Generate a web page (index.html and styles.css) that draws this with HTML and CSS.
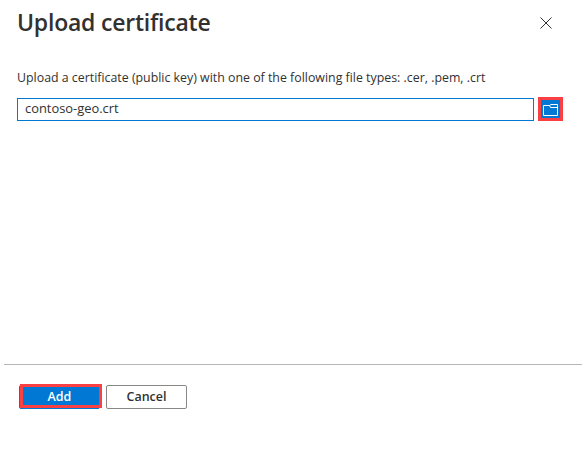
FILE: index.html
```html
<!DOCTYPE html>
<html lang="en">
<head>
<meta charset="utf-8">
<title>Upload certificate</title>
<link rel="stylesheet" href="styles.css">
</head>
<body>
<main class="panel">
  <header class="header">
    <h1 class="title">Upload certificate</h1>
    <button class="close" aria-label="Close"><svg width="12" height="12" viewBox="0 0 12 12"><path d="M.5.5l11 11M11.500.5l-11 11"/></svg></button>
  </header>
  <section class="content">
    <p class="hint">Upload a certificate (public key) with one of the following file types: .cer, .pem, .crt</p>
    <div class="picker">
      <div class="field">contoso-geo.crt</div>
      <button class="browse" aria-label="Browse"><svg width="15" height="12" viewBox="0 0 15 12"><path d="M.5 1.500H6.500L8 .5H14.500V11.500H.5zM6.500 1.500L7.500 3.500H14.500"/></svg></button>
    </div>
  </section>
  <footer class="footer">
    <div class="highlight"><button class="btn primary">Add</button></div>
    <button class="btn">Cancel</button>
  </footer>
</main>
</body>
</html>
```
FILE: styles.css
```css
* { box-sizing: border-box; }
body { margin: 0; background: #fff; color: #323130; font-family: "Open Sans", "Noto Sans", sans-serif; }
button { font: inherit; color: inherit; padding: 0; }
.panel { width: 582px; height: 459px; display: flex; flex-direction: column; overflow: hidden; }
.header { height: 46px; padding: 0 30px 0 17px; display: flex; justify-content: space-between; align-items: center; }
.title { margin: 0 0 2px; font-size: 23px; line-height: 44px; font-weight: 600; letter-spacing: -.22px; white-space: nowrap; }
.close { border: 0; background: none; width: 12px; height: 12px; display: flex; }
svg { display: block; fill: none; stroke: #323130; }
.content { height: 318px; padding: 22px 19px 0 17px; }
.hint { margin: 0; height: 20px; font-size: 12.370px; line-height: 20px; white-space: nowrap; }
.picker { display: flex; gap: 4px; margin-top: 9px; }
.field { width: 517px; height: 23px; margin-top: 1px; border: 1px solid #0078d4; padding-left: 7px; font-size: 12.900px; line-height: 18px; }
.browse { width: 25px; height: 24px; border: 3px solid #fb4043; background: #0078d4; display: flex; align-items: center; justify-content: center; }
.browse svg { stroke: #fff; margin-top: 1px; }
.footer { margin-left: 4px; border-top: 1px solid #b8b6b4; padding: 20px 0 0 15px; display: flex; gap: 6px; }
.highlight { position: relative; width: 81px; height: 24px; }
.highlight::after { content: ""; box-sizing: border-box; position: absolute; left: 1px; top: -1px; width: 82px; height: 24px; border: 3px solid #fb4043; }
.btn { display: block; width: 81px; height: 24px; border: 1px solid #8a8886; border-radius: 2px; background: #fff; font-size: 12.500px; font-weight: 600; line-height: 20px; }
.primary { border-color: #0078d4; background: #0078d4; color: #fff; }
```
